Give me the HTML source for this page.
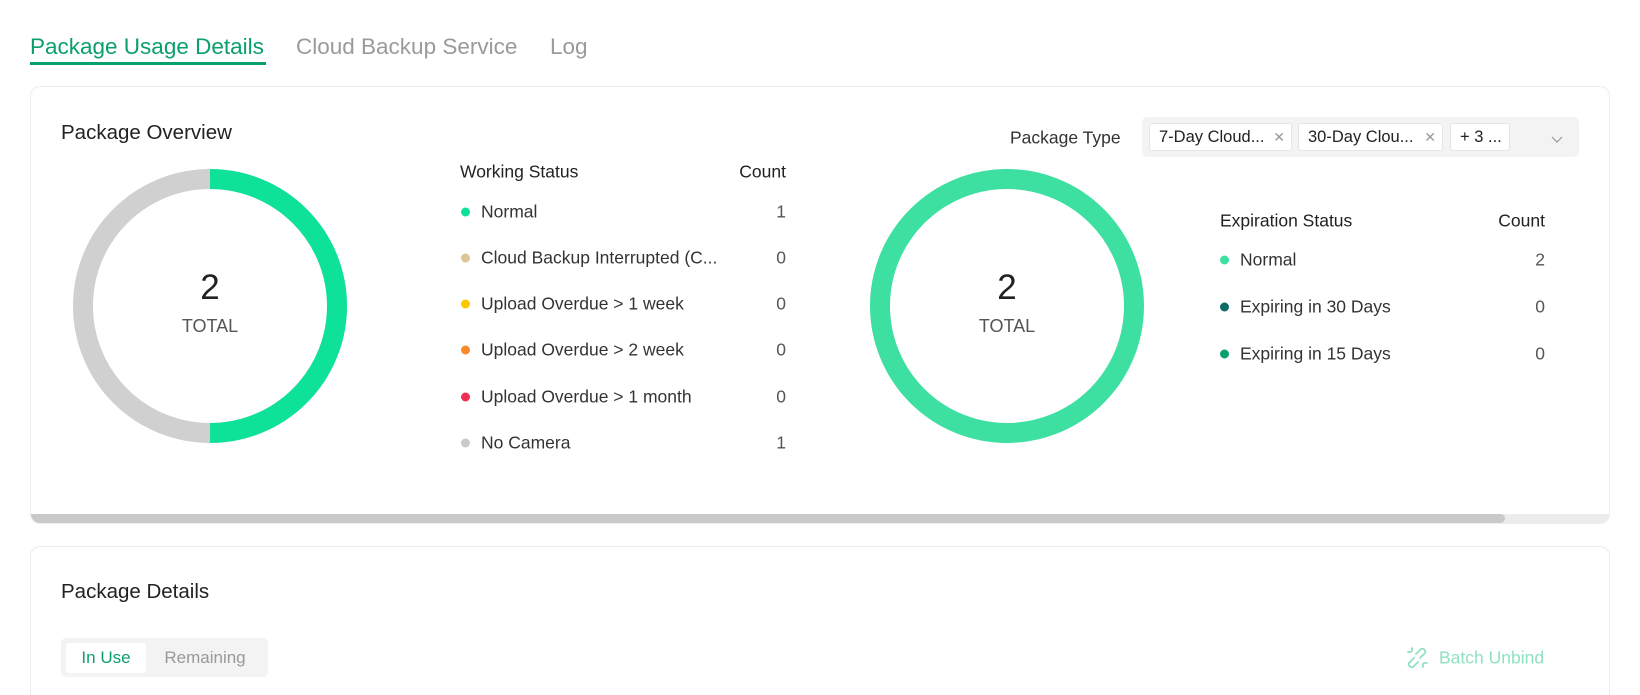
<!DOCTYPE html>
<html><head><meta charset="utf-8"><style>
*{margin:0;padding:0;box-sizing:border-box}
html,body{width:1640px;height:695px;overflow:hidden;background:#fff}
body{font-family:"Liberation Sans",sans-serif;color:#222}
#w{position:relative;width:1640px;height:695px;overflow:hidden}
.a{position:absolute;white-space:nowrap}
.tab{font-size:22.5px;top:34px;color:#9a9a9a}
.card{position:absolute;border:1px solid #ececec;border-radius:10px;background:#fff}
.t{font-size:17.5px;color:#333;transform:translateY(-50%)}
.n{font-size:17.5px;color:#555;transform:translateY(-50%)}
.dot{position:absolute;width:9px;height:9px;border-radius:50%;transform:translateY(-50%)}
.tag{position:absolute;top:6px;height:28px;background:#fff;border:1px solid #e6e6e6;border-radius:3px;font-size:16.5px;line-height:26px;padding-left:9px;color:#222}
.x{color:#999;font-size:14px;position:absolute;right:6px}
</style></head><body><div id="w">
<div class="a tab" style="left:30px;color:#0aa06a">Package Usage Details</div>
<div class="a" style="left:30px;top:62px;width:236px;height:3px;background:#0aa06a"></div>
<div class="a tab" style="left:296px">Cloud Backup Service</div>
<div class="a tab" style="left:550px">Log</div>

<div class="card" style="left:30px;top:86px;width:1580px;height:438px;overflow:hidden">
 <div class="a" style="left:0;bottom:0;width:1580px;height:9px;background:#ececec"></div>
 <div class="a" style="left:0;bottom:0;width:1474px;height:9px;background:#c9c9c9;border-radius:0 5px 5px 0"></div>
</div>
<div class="a" style="left:61px;top:121px;font-size:20.5px;color:#222">Package Overview</div>

<div class="a" style="left:170px;top:268px;width:80px;text-align:center;font-size:35px;color:#222">2</div>
<div class="a" style="left:160px;top:316px;width:100px;text-align:center;font-size:18px;color:#555">TOTAL</div>
<div class="a" style="left:967px;top:268px;width:80px;text-align:center;font-size:35px;color:#222">2</div>
<div class="a" style="left:957px;top:316px;width:100px;text-align:center;font-size:18px;color:#555">TOTAL</div>

<div class="a t" style="left:460px;top:172px;color:#222">Working Status</div>
<div class="a t" style="right:854px;top:172px;color:#222">Count</div>
<div class="dot" style="left:461px;top:212px;background:#0ee298"></div><div class="a t" style="left:481px;top:212px">Normal</div><div class="a n" style="right:854px;top:212px">1</div>
<div class="dot" style="left:461px;top:258px;background:#dcc593"></div><div class="a t" style="left:481px;top:258px">Cloud Backup Interrupted (C...</div><div class="a n" style="right:854px;top:258px">0</div>
<div class="dot" style="left:461px;top:304px;background:#fcc600"></div><div class="a t" style="left:481px;top:304px">Upload Overdue &gt; 1 week</div><div class="a n" style="right:854px;top:304px">0</div>
<div class="dot" style="left:461px;top:350px;background:#fa8a2c"></div><div class="a t" style="left:481px;top:350px">Upload Overdue &gt; 2 week</div><div class="a n" style="right:854px;top:350px">0</div>
<div class="dot" style="left:461px;top:397px;background:#ee3150"></div><div class="a t" style="left:481px;top:397px">Upload Overdue &gt; 1 month</div><div class="a n" style="right:854px;top:397px">0</div>
<div class="dot" style="left:461px;top:443px;background:#c9c9c9"></div><div class="a t" style="left:481px;top:443px">No Camera</div><div class="a n" style="right:854px;top:443px">1</div>

<div class="a t" style="left:1010px;top:138px">Package Type</div>
<div class="a" style="left:1142px;top:117px;width:437px;height:40px;background:#f3f3f3;border-radius:5px">
 <div class="tag" style="left:7px;width:143px">7-Day Cloud...<span class="x">✕</span></div>
 <div class="tag" style="left:156px;width:145px">30-Day Clou...<span class="x">✕</span></div>
 <div class="tag" style="left:308px;width:60px">+ 3 ...</div>
</div>

<div class="a t" style="left:1220px;top:221px;color:#222">Expiration Status</div>
<div class="a t" style="right:95px;top:221px;color:#222">Count</div>
<div class="dot" style="left:1220px;top:260px;background:#3de0a1"></div><div class="a t" style="left:1240px;top:260px">Normal</div><div class="a n" style="right:95px;top:260px">2</div>
<div class="dot" style="left:1220px;top:307px;background:#0c6b66"></div><div class="a t" style="left:1240px;top:307px">Expiring in 30 Days</div><div class="a n" style="right:95px;top:307px">0</div>
<div class="dot" style="left:1220px;top:354px;background:#0aa06a"></div><div class="a t" style="left:1240px;top:354px">Expiring in 15 Days</div><div class="a n" style="right:95px;top:354px">0</div>

<div class="card" style="left:30px;top:546px;width:1580px;height:149px;border-bottom:0;border-radius:10px 10px 0 0"></div>
<div class="a" style="left:61px;top:580px;font-size:20.5px;color:#222">Package Details</div>
<div class="a" style="left:61px;top:638px;width:207px;height:39px;background:#f3f3f3;border-radius:5px"></div>
<div class="a" style="left:66px;top:643px;width:80px;height:30px;background:#fff;border-radius:3px;color:#0aa06a;font-size:17px;line-height:30px;text-align:center">In Use</div>
<div class="a" style="left:146px;top:643px;width:118px;height:30px;color:#999;font-size:17px;line-height:30px;text-align:center">Remaining</div>
<div class="a t" style="left:1439px;top:658px;color:#8fe2c0">Batch Unbind</div>

<svg class="a" style="left:0;top:0;z-index:5" width="1640" height="695">
 <circle cx="210" cy="306" r="127" fill="none" stroke="#d0d0d0" stroke-width="20"/>
 <path d="M210 179 A127 127 0 0 1 210 433" fill="none" stroke="#0ee298" stroke-width="20"/>
 <circle cx="1007" cy="306" r="127" fill="none" stroke="#3de0a1" stroke-width="20"/>
 <path d="M1552 137 l5 5 l5 -5" fill="none" stroke="#999" stroke-width="1.2"/>
 <g fill="none" stroke="#8fe2c0" stroke-width="1.8" stroke-linecap="round">
  <path d="M1416 654 l5 -5 a3 3 0 0 1 4 4 l-5 5"/>
  <path d="M1418 662 l-5 5 a3 3 0 0 1 -4 -4 l5 -5"/>
  <path d="M1412 648 v3 M1408 652 h3 M1423 664 v3 M1424 663 h3"/>
 </g>
</svg>
</div></body></html>
